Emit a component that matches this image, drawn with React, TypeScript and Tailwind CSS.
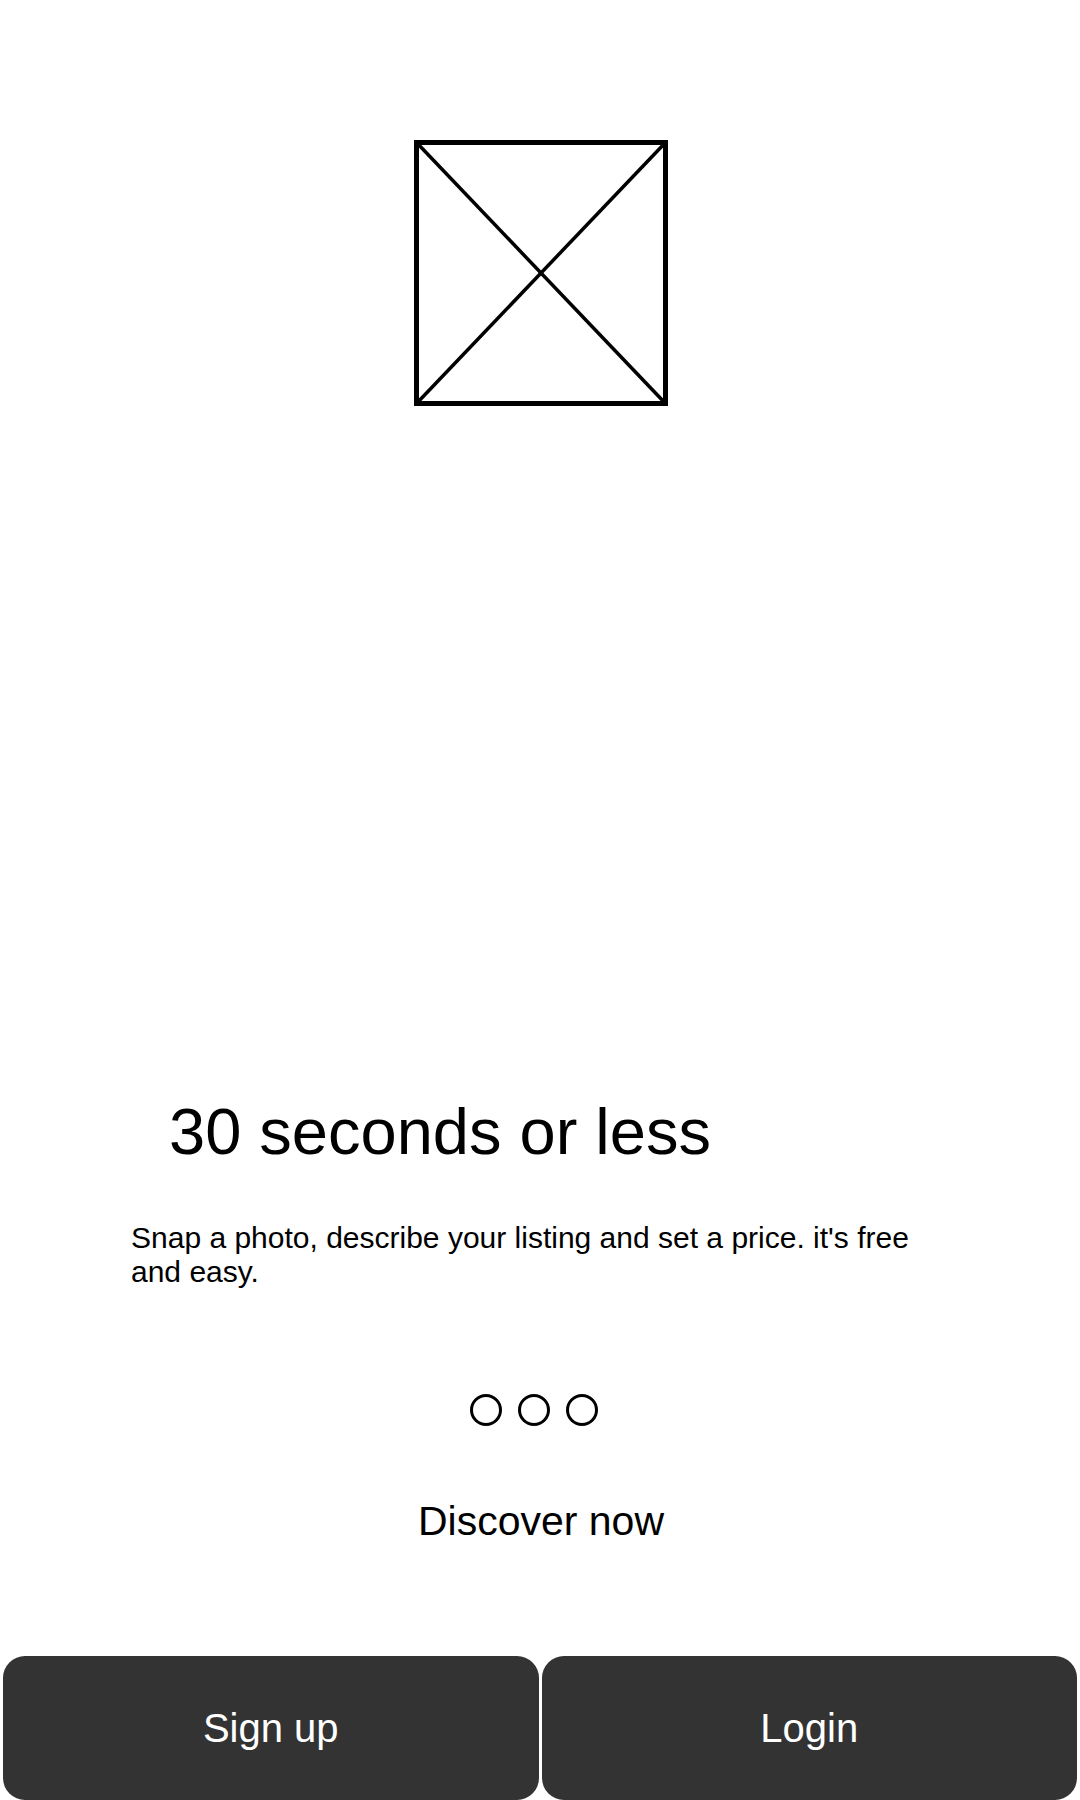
export default function App() {
  return (
    <div className="flex h-[1800px] w-full flex-col bg-white font-['Liberation_Sans',Arial,sans-serif] text-black">
      <div className="flex justify-center pl-[2px] pt-[140px]">
        <Placeholder />
      </div>

      <h1 className="ml-[169px] mt-[688px] text-[65px] font-normal leading-[75px]">
        30 seconds or less
      </h1>

      <p className="mt-[52px] px-[131px] text-[30px] leading-[34px]">
        Snap a photo, describe your listing and set a price. it's free and easy.
      </p>

      <div className="mt-[105px] flex justify-center gap-[16px] pr-[12px]">
        <span className="h-[32px] w-[32px] rounded-full border-[3px] border-black" />
        <span className="h-[32px] w-[32px] rounded-full border-[3px] border-black" />
        <span className="h-[32px] w-[32px] rounded-full border-[3px] border-black" />
      </div>

      <p className="mt-[72px] pl-[2px] text-center text-[41px] leading-[47px]">Discover now</p>

      <div className="mt-auto flex h-[144px] gap-[3px] px-[3px]">
        <button className="flex flex-1 items-center justify-center rounded-[22px] bg-[#333333] text-[40px] leading-[46px] text-white">
          Sign up
        </button>
        <button className="flex flex-1 items-center justify-center rounded-[22px] bg-[#333333] text-[40px] leading-[46px] text-white">
          Login
        </button>
      </div>
    </div>
  );
}

function Placeholder() {
  return (
    <svg width="254" height="266" viewBox="0 0 254 266" fill="none">
      <rect x="2.5" y="2.5" width="249" height="261" stroke="black" strokeWidth="5" />
      <line x1="3" y1="3" x2="251" y2="263" stroke="black" strokeWidth="3.5" />
      <line x1="251" y1="3" x2="3" y2="263" stroke="black" strokeWidth="3.5" />
    </svg>
  );
}
